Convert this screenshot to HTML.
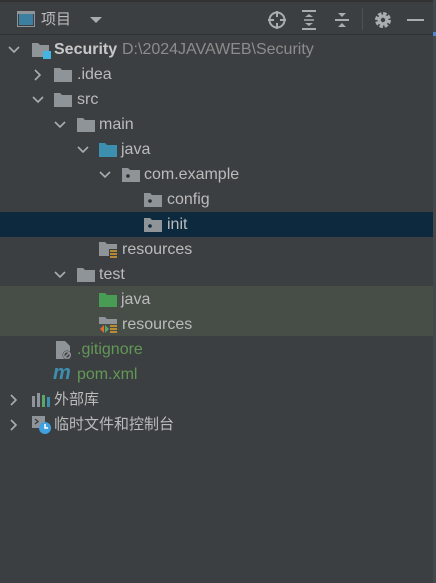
<!DOCTYPE html>
<html><head><meta charset="utf-8"><style>
*{margin:0;padding:0;box-sizing:border-box}
body{width:436px;height:583px;background:#3c3f41;font-family:"Liberation Sans","Noto Sans CJK SC",sans-serif;font-size:16px;color:#bbbbbb;position:relative;overflow:hidden}
.top{position:absolute;left:0;top:0;width:436px;height:2px;background:#323232}
.hdr{position:absolute;left:0;top:2px;width:436px;height:33px;border-bottom:1px solid #2f3133}
.row{position:absolute;left:0;width:433px;height:25px;line-height:25px;white-space:nowrap}
.row span,.row svg{position:absolute}
.sel{background:#0d293e}
.grn{background:#464e47}
.dim{color:#8c8c8c}
.cjk{font-size:15px}
</style></head><body>
<div class="top"></div>
<div class="hdr">
<svg style="position:absolute;left:17px;top:9px" width="18" height="16"><rect x="0.5" y="0.5" width="17" height="15" fill="none" stroke="#8f9499"/><rect x="2" y="3" width="14" height="11" fill="#3d7fa0"/><rect x="1" y="1" width="16" height="2" fill="#8f9499"/></svg>
<span style="position:absolute;left:41px;top:6px;font-size:15px">项目</span>
<svg style="position:absolute;left:90px;top:15px" width="12" height="7"><path d="M0 0H12L6 6Z" fill="#a9adb1"/></svg>
<svg style="position:absolute;left:267px;top:8px" width="20" height="20" fill="none" stroke="#a9adb1" stroke-width="2"><circle cx="10" cy="10" r="7.5"/><path d="M10 1v6M10 13v6M1 10h6M13 10h6"/></svg>
<svg style="position:absolute;left:301px;top:8px" width="16" height="20" stroke="#a9adb1" stroke-width="2" fill="#a9adb1"><path d="M1 1h14M1 19h14"/><path d="M4 7l4-3 4 3Z M4 13l4 3 4-3Z" stroke-width="0"/><path d="M3 10h10" stroke-width="1.5"/></svg>
<svg style="position:absolute;left:334px;top:8px" width="16" height="20" stroke="#a9adb1" stroke-width="2" fill="#a9adb1"><path d="M1 10h14"/><path d="M4 3l4 4 4-4Z M4 17l4-4 4 4Z" stroke-width="0"/></svg>
<div style="position:absolute;left:362px;top:6px;width:1px;height:22px;background:#4e5254"></div>
<svg style="position:absolute;left:374px;top:9px" width="18" height="18"><circle cx="9" cy="9" r="6" fill="none" stroke="#a9adb1" stroke-width="4" stroke-dasharray="3.2 1.5"/><circle cx="9" cy="9" r="5.5" fill="#a9adb1"/><circle cx="9" cy="9" r="2.2" fill="#3c3f41"/></svg>
<div style="position:absolute;left:407px;top:17px;width:17px;height:2px;background:#a9adb1"></div>
</div>
<div style="position:absolute;left:433px;top:0;width:3px;height:583px;background:#45484a"></div>
<div style="position:absolute;left:433px;top:32px;width:3px;height:4px;background:#4a88c7"></div>

<svg width="0" height="0" style="position:absolute"><defs>
<path id="cd" d="M1 3l5 5 5-5" fill="none" stroke="#a9adb1" stroke-width="1.6"/>
<path id="cr" d="M3 1l5 5-5 5" fill="none" stroke="#a9adb1" stroke-width="1.6"/>
</defs></svg>

<div class="row" style="top:37px">
<svg style="left:8px;top:7px" width="12" height="12"><use href="#cd"/></svg>
<svg style="left:32px;top:4px" width="20" height="18"><path d="M0 2h6l2 2h9v12H0Z" fill="#8f9499"/><rect x="11" y="10" width="8" height="8" fill="#40b6e0"/></svg>
<span style="left:54px;font-weight:bold;color:#c8c8c8">Security</span>
<span class="dim" style="left:122px">D:\2024JAVAWEB\Security</span>
</div>
<div class="row" style="top:62px">
<svg style="left:32px;top:7px" width="12" height="12"><use href="#cr"/></svg>
<svg style="left:54px;top:5px" width="18" height="16"><path d="M0 1h6l2 2h10v12H0Z" fill="#8f9499"/></svg>
<span style="left:77px">.idea</span></div>
<div class="row" style="top:87px">
<svg style="left:32px;top:7px" width="12" height="12"><use href="#cd"/></svg>
<svg style="left:54px;top:5px" width="18" height="16"><path d="M0 1h6l2 2h10v12H0Z" fill="#8f9499"/></svg>
<span style="left:77px">src</span></div>
<div class="row" style="top:112px">
<svg style="left:54px;top:7px" width="12" height="12"><use href="#cd"/></svg>
<svg style="left:77px;top:5px" width="18" height="16"><path d="M0 1h6l2 2h10v12H0Z" fill="#8f9499"/></svg>
<span style="left:99px">main</span></div>
<div class="row" style="top:137px">
<svg style="left:77px;top:7px" width="12" height="12"><use href="#cd"/></svg>
<svg style="left:99px;top:5px" width="18" height="16"><path d="M0 1h6l2 2h10v12H0Z" fill="#3d8fb0"/></svg>
<span style="left:121px">java</span></div>
<div class="row" style="top:162px">
<svg style="left:99px;top:7px" width="12" height="12"><use href="#cd"/></svg>
<svg style="left:122px;top:5px" width="18" height="16"><path d="M0 1h6l2 2h10v12H0Z" fill="#8f9499"/><circle cx="6" cy="9" r="1.8" fill="#2b2d2f"/></svg>
<span style="left:144px">com.example</span></div>
<div class="row" style="top:187px">
<svg style="left:144px;top:5px" width="18" height="16"><path d="M0 1h6l2 2h10v12H0Z" fill="#8f9499"/><circle cx="6" cy="9" r="1.8" fill="#2b2d2f"/></svg>
<span style="left:167px">config</span></div>
<div class="row sel" style="top:212px">
<svg style="left:144px;top:5px" width="18" height="16"><path d="M0 1h6l2 2h10v12H0Z" fill="#8f9499"/><circle cx="6" cy="9" r="1.8" fill="#0d293e"/></svg>
<span style="left:167px">init</span></div>
<div class="row" style="top:237px">
<svg style="left:99px;top:4px" width="20" height="18"><path d="M0 1h6l2 2h10v12H0Z" fill="#8f9499"/><rect x="10" y="8" width="9" height="10" fill="#3c3f41"/><path d="M11 10h7M11 13h7M11 16h7" stroke="#e0a030" stroke-width="1.5"/></svg>
<span style="left:122px">resources</span></div>
<div class="row" style="top:262px">
<svg style="left:54px;top:7px" width="12" height="12"><use href="#cd"/></svg>
<svg style="left:77px;top:5px" width="18" height="16"><path d="M0 1h6l2 2h10v12H0Z" fill="#8f9499"/></svg>
<span style="left:99px">test</span></div>
<div class="row grn" style="top:286px;height:50px"></div>
<div class="row" style="top:287px">
<svg style="left:99px;top:5px" width="18" height="16"><path d="M0 1h6l2 2h10v12H0Z" fill="#499c54"/></svg>
<span style="left:121px">java</span></div>
<div class="row" style="top:312px">
<svg style="left:99px;top:4px" width="20" height="18"><path d="M0 1h6l2 2h10v12H0Z" fill="#8f9499"/><rect x="0" y="8" width="19" height="10" fill="#464e47"/><path d="M5 9l-4 4 4 4Z" fill="#e06c30"/><path d="M6 9l4 4-4 4Z" fill="#59a869"/><path d="M11 10h7M11 13h7M11 16h7" stroke="#e0a030" stroke-width="1.5"/></svg>
<span style="left:122px">resources</span></div>
<div class="row" style="top:337px">
<svg style="left:55px;top:3px" width="18" height="20"><path d="M1 1h9l5 5v13H1Z" fill="#8f9499"/><circle cx="12" cy="15" r="4.5" fill="#3c3f41"/><circle cx="12" cy="15" r="3.3" fill="none" stroke="#8f9499" stroke-width="1.5"/><path d="M10 17l4-4" stroke="#8f9499" stroke-width="1.5"/></svg>
<span style="left:77px;color:#629755">.gitignore</span></div>
<div class="row" style="top:362px">
<span style="left:53px;top:-1px;font-size:20px;font-weight:bold;font-style:italic;color:#3d8fb0">m</span>
<span style="left:77px;color:#629755">pom.xml</span></div>
<div class="row" style="top:387px">
<svg style="left:8px;top:7px" width="12" height="12"><use href="#cr"/></svg>
<svg style="left:32px;top:5px" width="20" height="16"><rect x="0" y="4" width="3" height="11" fill="#8f9499"/><rect x="5" y="1" width="3" height="14" fill="#8f9499"/><rect x="10" y="3" width="3" height="12" fill="#59a869"/><rect x="15" y="5" width="3" height="10" fill="#3d8fb0"/></svg>
<span class="cjk" style="left:54px">外部库</span></div>
<div class="row" style="top:412px">
<svg style="left:8px;top:7px" width="12" height="12"><use href="#cr"/></svg>
<svg style="left:32px;top:3px" width="20" height="20"><rect x="0" y="1" width="13" height="12" fill="#8f9499"/><path d="M3 4l3 2.5-3 2.5" stroke="#3c3f41" fill="none" stroke-width="1.4"/><circle cx="13" cy="13" r="6" fill="#40a0e0"/><path d="M13 9v4h3" stroke="#fff" fill="none" stroke-width="1.5"/></svg>
<span class="cjk" style="left:54px">临时文件和控制台</span></div>
</body></html>
